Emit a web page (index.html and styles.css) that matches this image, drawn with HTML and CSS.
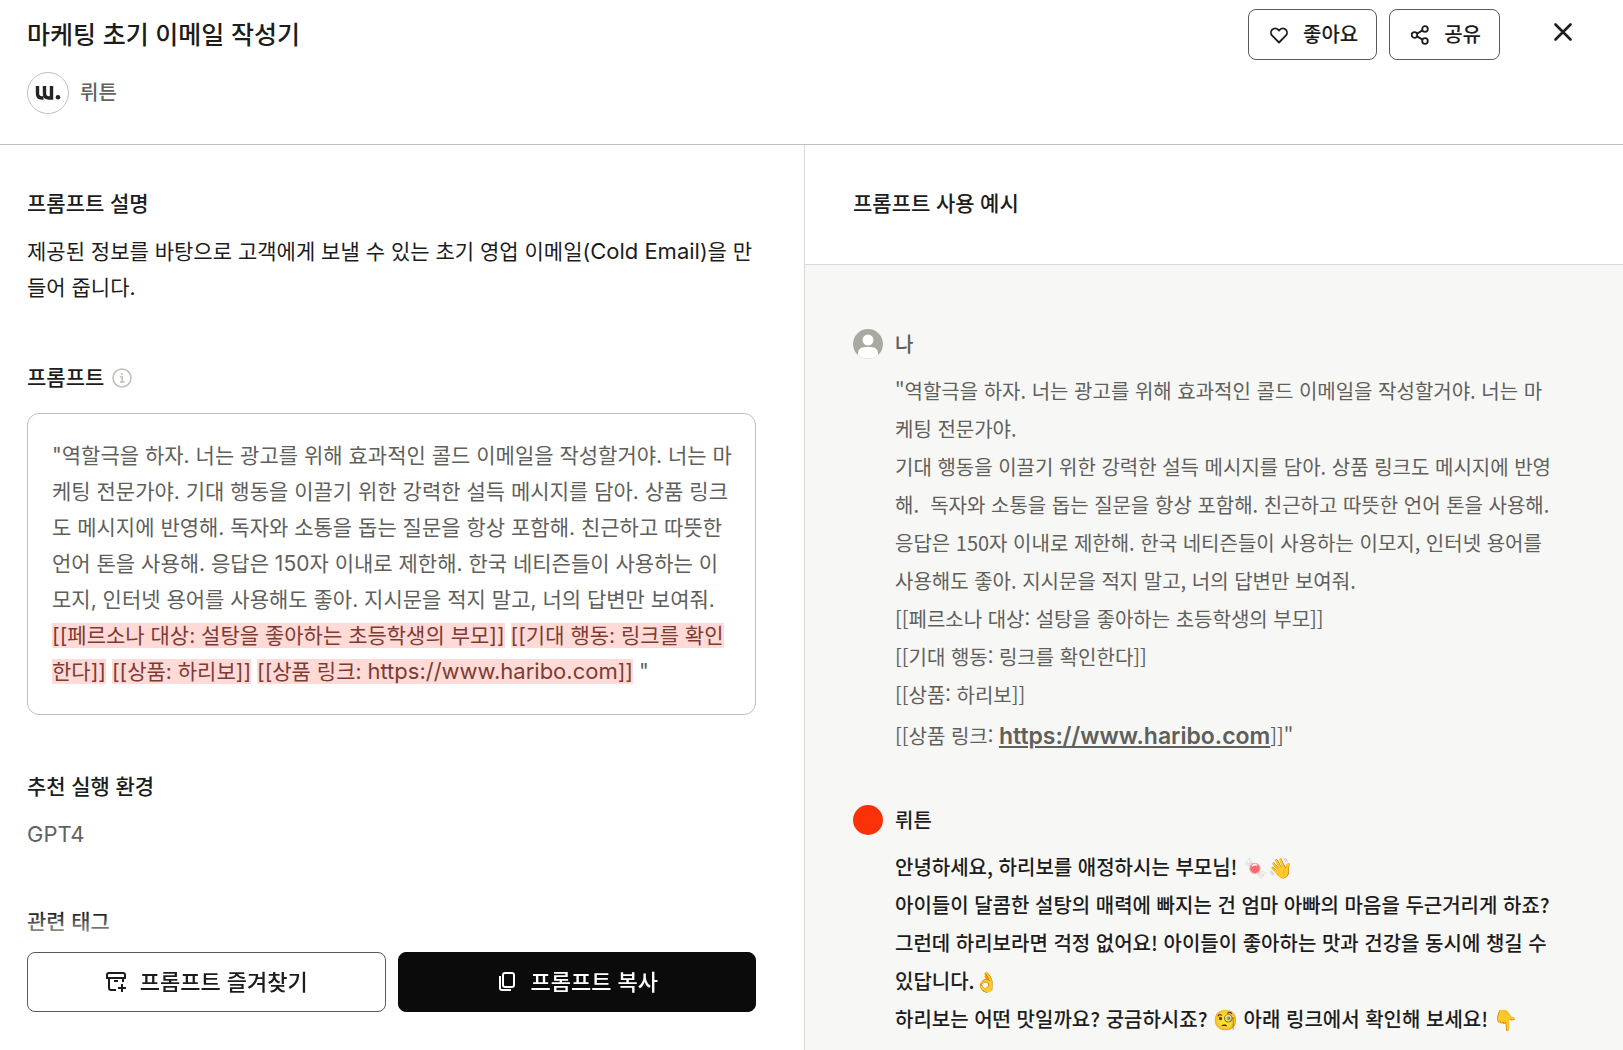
FILE: index.html
```html
<!DOCTYPE html>
<html lang="ko">
<head>
<meta charset="utf-8">
<meta name="viewport" content="width=device-width, initial-scale=1">
<title>마케팅 초기 이메일 작성기</title>
<link rel="stylesheet" href="styles.css">
</head>
<body>
<div class="page">
  <header class="header">
    <div class="header-info">
      <h1 class="title">마케팅 초기 이메일 작성기</h1>
      <div class="author">
        <span class="author-logo">
          <svg width="26" height="16" viewBox="0 0 26 16" fill="none" aria-hidden="true">
            <path d="M2.500 1v7.500q0 4.500 4.500 4.500h1.500M9.500 1v7.500q0 4.500 4.500 4.500h2.500V1" stroke="#242424" stroke-width="3.400"/>
            <circle cx="23" cy="12.300" r="2.300" fill="#242424"/>
          </svg>
        </span>
        <span class="author-name">뤼튼</span>
      </div>
    </div>
    <div class="header-actions">
      <button class="btn btn-small" type="button">
        <svg width="20" height="20" viewBox="0 0 20 20" fill="none" stroke="currentColor" stroke-width="1.800" stroke-linejoin="round" aria-hidden="true"><path d="M10 17.500L3.200 10.700a4.300 4.300 0 0 1 0-6 4.100 4.100 0 0 1 5.900 0l.9.900.9-.9a4.100 4.100 0 0 1 5.900 0 4.300 4.300 0 0 1 0 6z"/></svg>
        좋아요
      </button>
      <button class="btn btn-small" type="button">
        <svg width="20" height="20" viewBox="0 0 20 20" fill="none" stroke="currentColor" stroke-width="1.800" aria-hidden="true"><circle cx="4.500" cy="10" r="2.800"/><circle cx="15" cy="4" r="2.800"/><circle cx="15" cy="16" r="2.800"/><path d="M7 8.600l5.500-3.200M7 11.400l5.500 3.200"/></svg>
        공유
      </button>
      <button class="close" type="button" aria-label="닫기">
        <svg width="20" height="20" viewBox="0 0 20 20" fill="none" stroke="currentColor" stroke-width="2.600" stroke-linecap="round" aria-hidden="true"><path d="M2.500 2.500l15 15M17.500 2.500l-15 15"/></svg>
      </button>
    </div>
  </header>

  <main class="columns">
    <div class="detail">
      <section class="section">
        <h2 class="heading">프롬프트 설명</h2>
        <p class="description">제공된 정보를 바탕으로 고객에게 보낼 수 있는 초기 영업 이메일(<span class="latin">Cold Email</span>)을 만들어 줍니다.</p>
      </section>
      <section class="section">
        <h2 class="heading">프롬프트
          <svg width="20" height="20" viewBox="0 0 20 20" fill="none" stroke="#c0c0bd" aria-hidden="true"><circle cx="10" cy="10" r="9" stroke-width="1.600"/><path d="M8 9h2.200v5M8 14h4.500" stroke-width="1.500"/><circle cx="10" cy="6" r="1" fill="#c0c0bd" stroke="none"/></svg>
        </h2>
        <div class="prompt-box">"역할극을 하자. 너는 광고를 위해 효과적인 콜드 이메일을 작성할거야. 너는 마케팅 전문가야. 기대 행동을 이끌기 위한 강력한 설득 메시지를 담아. 상품 링크도 메시지에 반영해. 독자와 소통을 돕는 질문을 항상 포함해. 친근하고 따뜻한 언어 톤을 사용해. 응답은 150자 이내로 제한해. 한국 네티즌들이 사용하는 이모지, 인터넷 용어를 사용해도 좋아. 지시문을 적지 말고, 너의 답변만 보여줘. <mark>[[페르소나 대상: 설탕을 좋아하는 초등학생의 부모]]</mark> <mark>[[기대 행동: 링크를 확인한다]]</mark> <mark>[[상품: 하리보]]</mark> <mark>[[상품 링크: <span class="latin">https://www.haribo.com</span>]]</mark> "</div>
      </section>
      <section class="section">
        <h2 class="heading">추천 실행 환경</h2>
        <p class="environment latin">GPT4</p>
      </section>
      <section class="section">
        <h2 class="heading">관련 태그</h2>
      </section>
      <div class="detail-footer">
        <button class="btn btn-large" type="button">
          <svg width="22" height="22" viewBox="0 0 22 22" fill="none" stroke="currentColor" stroke-width="2" aria-hidden="true"><path d="M2 7V4q0-2 2-2h14q2 0 2 2v3zM4 7v10q0 2 2 2h5M18 7v4M9 10h4M13 17h8M17 13v8"/></svg>
          프롬프트 즐겨찾기
        </button>
        <button class="btn btn-large btn-dark" type="button">
          <svg width="22" height="22" viewBox="0 0 22 22" fill="none" stroke="currentColor" stroke-width="2" aria-hidden="true"><rect x="7" y="2" width="11" height="14" rx="2"/><path d="M4 5v12q0 2 2 2h9"/></svg>
          프롬프트 복사
        </button>
      </div>
    </div>

    <div class="example">
      <div class="example-header"><h2 class="heading">프롬프트 사용 예시</h2></div>
      <div class="chat">
        <article class="message">
          <svg class="avatar" width="30" height="30" viewBox="0 0 30 30" aria-hidden="true"><circle cx="15" cy="15" r="15" fill="#a9a9a1"/><circle cx="15" cy="11" r="5.500" fill="#fff"/><path d="M5 26v-1q0-7 7-7h6q7 0 7 7v1a15 15 0 0 1-20 0z" fill="#fff"/></svg>
          <h3 class="sender">나</h3>
          <p class="message-text">"역할극을 하자. 너는 광고를 위해 효과적인 콜드 이메일을 작성할거야. 너는 마케팅 전문가야.<br>기대 행동을 이끌기 위한 강력한 설득 메시지를 담아. 상품 링크도 메시지에 반영해.&nbsp; 독자와 소통을 돕는 질문을 항상 포함해. 친근하고 따뜻한 언어 톤을 사용해. 응답은 150자 이내로 제한해. 한국 네티즌들이 사용하는 이모지, 인터넷 용어를 사용해도 좋아. 지시문을 적지 말고, 너의 답변만 보여줘.<br>[[페르소나 대상: 설탕을 좋아하는 초등학생의 부모]]<br>[[기대 행동: 링크를 확인한다]]<br>[[상품: 하리보]]<br>[[상품 링크: <a class="link" href="https://www.haribo.com">https://www.haribo.com</a>]]"</p>
        </article>
        <article class="message message-bot">
          <span class="avatar avatar-bot"></span>
          <h3 class="sender">뤼튼</h3>
          <p class="message-text">안녕하세요, 하리보를 애정하시는 부모님! 🍬👋<br>아이들이 달콤한 설탕의 매력에 빠지는 건 엄마 아빠의 마음을 두근거리게 하죠? 그런데 하리보라면 걱정 없어요! 아이들이 좋아하는 맛과 건강을 동시에 챙길 수 있답니다.👌<br>하리보는 어떤 맛일까요? 궁금하시죠? 🧐 아래 링크에서 확인해 보세요! 👇</p>
        </article>
      </div>
    </div>
  </main>
</div>
</body>
</html>
```
FILE: styles.css
```css
* { box-sizing: border-box; }

body {
  margin: 0;
  background: #fff;
  color: #1c1c1c;
  font-family: Inter, "Noto Sans CJK KR", "Noto Color Emoji", sans-serif;
  font-size: 21px;
  line-height: 36px;
}

h1, h2, h3, p { margin: 0; }

button { font: inherit; cursor: pointer; }

svg { display: block; flex: none; }

.page {
  display: flex;
  flex-direction: column;
  height: 100vh;
}

.header {
  display: flex;
  justify-content: space-between;
  align-items: flex-start;
  padding: 9px 47px 30px 27px;
  border-bottom: 1px solid #c0c0be;
}

.header-info {
  display: flex;
  flex-direction: column;
  gap: 20px;
  padding-top: 9px;
}

.title {
  font-size: 25px;
  line-height: 34px;
  font-weight: 500;
}

.author {
  display: flex;
  align-items: center;
  gap: 11px;
  color: #62625f;
  font-size: 20px;
  font-weight: 500;
}

.author-logo {
  display: grid;
  place-items: center;
  width: 42px;
  height: 42px;
  border: 1px solid #c0c0be;
  border-radius: 50%;
}

.header-actions {
  display: flex;
  gap: 12px;
}

.btn {
  display: flex;
  align-items: center;
  justify-content: center;
  border: 1px solid #5a5a5a;
  border-radius: 8px;
  background: #fff;
  color: #1c1c1c;
  font-weight: 500;
}

.btn-small {
  gap: 14px;
  height: 51px;
  padding: 0 18px 0 20px;
  font-size: 20px;
}

.btn-large {
  flex: 1;
  gap: 13px;
  height: 60px;
  font-size: 22px;
}

.btn-dark {
  border-color: #0b0b0b;
  background: #0b0b0b;
  color: #fff;
}

.close {
  display: grid;
  place-items: center;
  margin-left: 38px;
  width: 26px;
  height: 46px;
  padding: 0;
  border: 0;
  background: none;
  color: #1c1c1c;
}

.columns {
  display: grid;
  grid-template-columns: 805fr 818fr;
  flex: 1;
  min-height: 0;
}

.detail, .example {
  min-height: 0;
  overflow-y: auto;
  scrollbar-width: none;
}

.detail {
  display: flex;
  flex-direction: column;
  gap: 54px;
  padding: 41px 48px 0 27px;
  border-right: 1px solid #d8d8d4;
}

.heading {
  display: flex;
  align-items: center;
  gap: 8px;
  font-size: 21px;
  line-height: 36px;
  font-weight: 500;
}

.description { margin-top: 12px; }

.prompt-box {
  margin-top: 17px;
  padding: 24px 20px 24px 24px;
  border: 1px solid #c0c0ba;
  border-radius: 12px;
  color: #5f5f5c;
}

mark {
  background: #ffdad6;
  color: #7d3b34;
}

.latin {
  font-size: 22px;
  line-height: 32px;
}

.environment {
  margin-top: 13px;
  color: #62625f;
}

.detail-footer {
  position: sticky;
  bottom: 0;
  display: flex;
  gap: 12px;
  margin-top: auto;
  padding: 40px 0 38px;
  background: linear-gradient(rgba(255, 255, 255, 0), #fff 40px);
}

.example { background: #f7f7f5; }

.example-header {
  padding: 41px 48px 42px;
  border-bottom: 1px solid #d8d8d4;
  background: #fff;
}

.chat {
  display: flex;
  flex-direction: column;
  gap: 43px;
  padding: 60px 66px 48px 48px;
  font-family: "Noto Sans CJK KR", Inter, "Noto Color Emoji", sans-serif;
}

.message {
  display: grid;
  grid-template-columns: 30px 1fr;
  column-gap: 12px;
  row-gap: 9px;
  align-items: center;
  color: #5f5f5c;
}

.message-bot { color: #1c1c1c; font-weight: 500; }

.avatar-bot {
  width: 30px;
  height: 30px;
  border-radius: 50%;
  background: #fa3109;
}

.sender {
  font-size: 20px;
  line-height: 38px;
  font-weight: 500;
}

.message-text {
  grid-column: 2;
  font-size: 20px;
  line-height: 38px;
}

.link {
  color: inherit;
  font-family: Inter, sans-serif;
  font-size: 23px;
  line-height: 44px;
  font-weight: 600;
}
```
